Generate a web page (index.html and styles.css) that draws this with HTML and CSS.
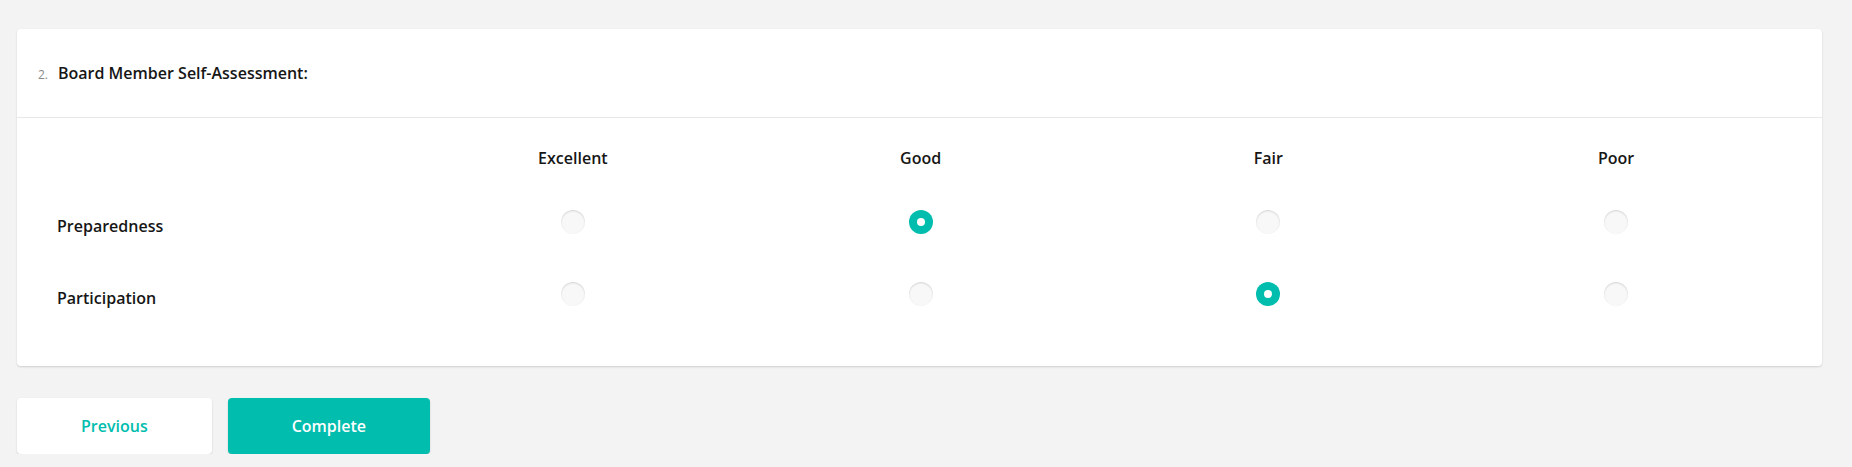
FILE: index.html
```html
<!DOCTYPE html>
<html lang="en">

<head>
    <meta charset="UTF-8">
    <meta name="viewport" content="width=device-width, initial-scale=1.0">
    <title>Board Member Self-Assessment</title>
    <link rel="stylesheet" href="styles.css">
</head>

<body>
    <div class="survey">
        <div class="question">
            <div class="question-header">
                <span class="question-num">2.</span>
                <h2 class="question-title">Board Member Self-Assessment:</h2>
            </div>

            <!-- Rating matrix -->
            <div class="matrix">
                <div class="matrix-head"></div>
                <div class="matrix-head">Excellent</div>
                <div class="matrix-head">Good</div>
                <div class="matrix-head">Fair</div>
                <div class="matrix-head">Poor</div>

                <div class="matrix-label">Preparedness</div>
                <div class="matrix-cell"><span class="radio"></span></div>
                <div class="matrix-cell"><span class="radio checked"></span></div>
                <div class="matrix-cell"><span class="radio"></span></div>
                <div class="matrix-cell"><span class="radio"></span></div>

                <div class="matrix-label">Participation</div>
                <div class="matrix-cell"><span class="radio"></span></div>
                <div class="matrix-cell"><span class="radio"></span></div>
                <div class="matrix-cell"><span class="radio checked"></span></div>
                <div class="matrix-cell"><span class="radio"></span></div>
            </div>
        </div>

        <div class="nav">
            <button class="btn btn-prev">Previous</button>
            <button class="btn btn-complete">Complete</button>
        </div>
    </div>
</body>

</html>
```

FILE: styles.css
```css
body {
    font-family: 'Open Sans', 'Noto Sans', sans-serif;
    background-color: #f3f3f3;
    color: #161616;
    margin: 0;
    padding: 29px 30px 0 17px;
}

.question {
    background-color: #fff;
    border-radius: 4px;
    box-shadow: 0 1px 2px rgba(0, 0, 0, 0.15);
}

.question-header {
    height: 88px;
    display: flex;
    align-items: center;
    padding-left: 21px;
    border-bottom: 1px solid #e8e8e8;
}

.question-num {
    font-size: 12px;
    color: #8a8a8a;
    width: 20px;
    padding-top: 2px;
}

.question-title {
    margin: 0;
    font-size: 16px;
    font-weight: 600;
    line-height: 24px;
}

.matrix {
    display: grid;
    grid-template-columns: 342px repeat(4, 1fr);
    grid-template-rows: 40px 72px 72px;
    padding: 28px 32px 36px 40px;
}

.matrix-head {
    font-size: 16px;
    font-weight: 600;
    line-height: 24px;
    text-align: center;
}

.matrix-label {
    font-size: 16px;
    font-weight: 600;
    line-height: 24px;
    display: flex;
    align-items: center;
    padding-top: 8px;
}

.matrix-cell {
    display: flex;
    align-items: center;
    justify-content: center;
}

.radio {
    width: 24px;
    height: 24px;
    border-radius: 50%;
    background-color: #f8f8f8;
    box-shadow: inset 0 1px 2px rgba(0, 0, 0, 0.15);
    display: flex;
    align-items: center;
    justify-content: center;
}

.radio.checked {
    background-color: #00bdae;
    box-shadow: none;
}

.radio.checked::after {
    content: '';
    width: 8px;
    height: 8px;
    border-radius: 50%;
    background-color: #fff;
}

.nav {
    display: flex;
    gap: 16px;
    margin-top: 32px;
}

.btn {
    height: 56px;
    padding: 0 64px;
    font-family: inherit;
    font-size: 16px;
    font-weight: 600;
    border: none;
    border-radius: 4px;
    box-shadow: 0 1px 2px rgba(0, 0, 0, 0.15);
    cursor: pointer;
}

.btn-prev {
    background-color: #fff;
    color: #00bdae;
}

.btn-complete {
    background-color: #00bdae;
    color: #fff;
}
```
